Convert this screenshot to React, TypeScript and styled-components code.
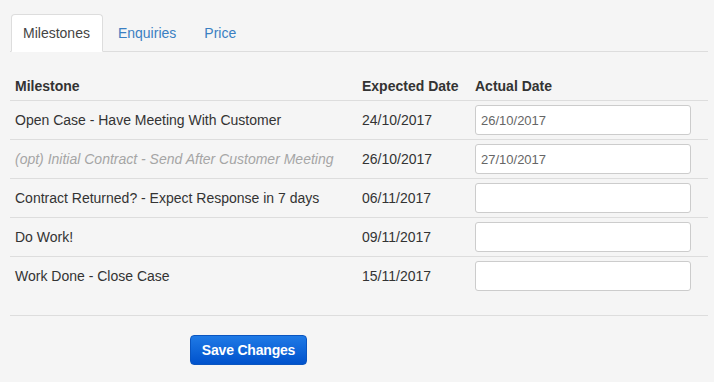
import { FC } from "react";
import styled, { createGlobalStyle } from "styled-components";

interface IMilestone {
	name: string;
	expected: string;
	actual: string;
	optional?: boolean;
}

const milestones: IMilestone[] = [
	{ name: "Open Case - Have Meeting With Customer", expected: "24/10/2017", actual: "26/10/2017" },
	{
		name: "(opt) Initial Contract - Send After Customer Meeting",
		expected: "26/10/2017",
		actual: "27/10/2017",
		optional: true,
	},
	{ name: "Contract Returned? - Expect Response in 7 days", expected: "06/11/2017", actual: "" },
	{ name: "Do Work!", expected: "09/11/2017", actual: "" },
	{ name: "Work Done - Close Case", expected: "15/11/2017", actual: "" },
];

const tabs = ["Milestones", "Enquiries", "Price"];

const App: FC = () => {
	return (
		<Page>
			<GlobalStyle />
			<TabList>
				{tabs.map((tab, idx) => (
					<Tab key={tab} $isActive={idx === 0}>
						{tab}
					</Tab>
				))}
			</TabList>

			<Table>
				<colgroup>
					<col style={{ width: 347 }} />
					<col style={{ width: 113 }} />
					<col />
				</colgroup>
				<thead>
					<tr>
						<HeadCell>Milestone</HeadCell>
						<HeadCell>Expected Date</HeadCell>
						<HeadCell>Actual Date</HeadCell>
					</tr>
				</thead>
				<tbody>
					{milestones.map((m) => (
						<tr key={m.name}>
							<Cell $isOptional={m.optional}>{m.name}</Cell>
							<Cell>{m.expected}</Cell>
							<Cell>
								<DateInput type="text" defaultValue={m.actual} />
							</Cell>
						</tr>
					))}
				</tbody>
			</Table>

			<Footer>
				<SaveButton type="button">Save Changes</SaveButton>
			</Footer>
		</Page>
	);
};

export default App;

const GlobalStyle = createGlobalStyle`
	html, body {
		margin: 0;
		background: #f5f5f5;
	}
	body {
		font-family: "Liberation Sans", Arial, sans-serif;
		font-size: 14px;
		color: #333;
	}
`;

const Page = styled.div`
	padding: 14px 6px 0 10px;
	height: 368px;
`;

const TabList = styled.ul`
	display: flex;
	margin: 0;
	padding: 0 0 0 1px;
	list-style: none;
	border-bottom: 1px solid #dddddd;
`;

const Tab = styled.li<{ $isActive?: boolean }>`
	margin: 0 3px -1px 0;
	padding: 8px 12px 8px 11px;
	line-height: 20px;
	border: 1px solid ${({ $isActive }) => ($isActive ? "#dddddd" : "transparent")};
	border-bottom-color: ${({ $isActive }) => ($isActive ? "#ffffff" : "transparent")};
	border-radius: 4px 4px 0 0;
	background: ${({ $isActive }) => ($isActive ? "#ffffff" : "transparent")};
	color: ${({ $isActive }) => ($isActive ? "#444" : "#3a7fc2")};
	cursor: pointer;
`;

const Table = styled.table`
	width: 100%;
	margin-top: 20px;
	border-collapse: collapse;
	table-layout: fixed;
`;

const HeadCell = styled.th`
	padding: 4px 5px;
	line-height: 20px;
	text-align: left;
	font-weight: bold;
	color: #333;
	border-bottom: 1px solid #dddddd;
`;

const Cell = styled.td<{ $isOptional?: boolean }>`
	padding: 4px 5px;
	line-height: 20px;
	height: 30px;
	border-top: 1px solid #dddddd;
	white-space: nowrap;
	color: ${({ $isOptional }) => ($isOptional ? "#a5a5a5" : "#333")};
	font-style: ${({ $isOptional }) => ($isOptional ? "italic" : "normal")};

	tr:first-child > & {
		border-top: none;
	}
`;

const DateInput = styled.input`
	box-sizing: border-box;
	display: block;
	width: 216px;
	height: 30px;
	padding: 4px 5px;
	border: 1px solid #cccccc;
	border-radius: 3px;
	background: #ffffff;
	font-family: "Liberation Sans", Arial, sans-serif;
	font-size: 13px;
	color: #666;
	outline: none;
`;

const Footer = styled.div`
	margin-top: 20px;
	padding: 19px 0 0 180px;
	border-top: 1px solid #dddddd;
`;

const SaveButton = styled.button`
	width: 117px;
	height: 30px;
	border: 1px solid #0a55c0;
	border-radius: 4px;
	background: linear-gradient(to bottom, #1f7ae6, #0052cc);
	color: #ffffff;
	font-family: "Liberation Sans", Arial, sans-serif;
	font-size: 14px;
	font-weight: bold;
	letter-spacing: -0.2px;
	cursor: pointer;
`;
